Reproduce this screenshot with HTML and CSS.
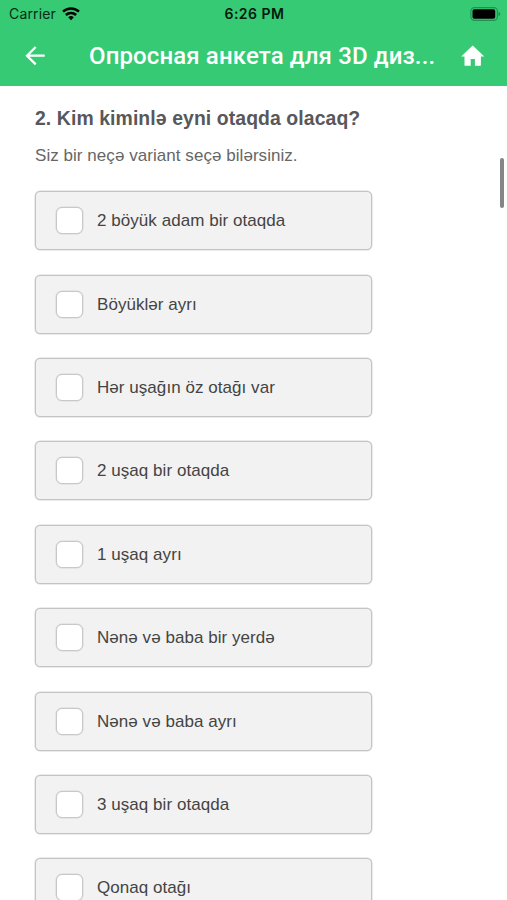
FILE: index.html
```html
<!DOCTYPE html>
<html lang="az">
<head>
<meta charset="utf-8">
<title>Опросная анкета</title>
<link rel="stylesheet" href="styles.css">
</head>
<body>
<header class="top">
  <div class="status">
    <div class="carrier"><span>Carrier</span>
      <svg class="wifi" width="18" height="14" viewBox="0 0 18 14"><g fill="none" stroke="#000" stroke-width="2.5"><path d="M1 4.700a11.4 11.4 0 0 1 16 0"/><path d="M3.900 8a7.200 7.200 0 0 1 10.200 0"/></g><path d="M9 13.200 6.200 10.300a4 4 0 0 1 5.600 0z"/></svg>
    </div>
    <span class="time">6:26 PM</span>
    <svg class="battery" width="31" height="14" viewBox="0 0 31 14"><rect x=".9" y=".6" width="26.500" height="12.8" rx="3.6" fill="none" stroke="#229050" stroke-width="1.1"/><rect x="2.5" y="2.3" width="22.700" height="9.4" rx="1.8"/><path d="M28.500 4.8q1.800.8 1.800 2.200t-1.800 2.200z" fill="#229050"/></svg>
  </div>
  <nav class="bar">
    <svg class="back" width="22" height="22" viewBox="0 0 22 22" fill="none" stroke="#fff" stroke-width="2.3"><path d="M20.700 10.700H3M11.700 2 3 10.700l8.700 8.700"/></svg>
    <h1 class="title">Опросная анкета для 3D диз...</h1>
    <svg class="home" width="24" height="22" viewBox="0 0 24 22"><path fill="#fff" d="M9.700 20.700v-6.700h4.200v6.700h6V11.500H23.300L11.700 .5 .2 11.500h3.300V20.700z"/></svg>
  </nav>
</header>
<main class="content">
  <h2 class="question">2. Kim kiminlə eyni otaqda olacaq?</h2>
  <p class="hint">Siz bir neçə variant seçə bilərsiniz.</p>
  <div class="options">
    <div class="option"><i class="box"></i><span>2 böyük adam bir otaqda</span></div>
    <div class="option"><i class="box"></i><span>Böyüklər ayrı</span></div>
    <div class="option"><i class="box"></i><span>Hər uşağın öz otağı var</span></div>
    <div class="option"><i class="box"></i><span>2 uşaq bir otaqda</span></div>
    <div class="option"><i class="box"></i><span>1 uşaq ayrı</span></div>
    <div class="option"><i class="box"></i><span>Nənə və baba bir yerdə</span></div>
    <div class="option"><i class="box"></i><span>Nənə və baba ayrı</span></div>
    <div class="option"><i class="box"></i><span>3 uşaq bir otaqda</span></div>
    <div class="option"><i class="box"></i><span>Qonaq otağı</span></div>
  </div>
</main>
<div class="scrollbar"></div>
</body>
</html>
```
FILE: styles.css
```css
* { box-sizing: border-box; }
html, body { margin: 0; height: 900px; overflow: hidden; background: #fff; }
body { font-family: "Liberation Sans", Arial, sans-serif; color: #444; }
.top { height: 86px; background: #36ca74; }
.status { display: grid; grid-template-columns: 1fr auto 1fr; align-items: center; height: 27px; padding: 0 6px 0 9px; font: 14px/27px Inter, sans-serif; color: #062b16; }
.carrier { display: flex; align-items: center; gap: 6px; letter-spacing: .15px; }
.time { margin-right: 1px; font-weight: 600; letter-spacing: .5px; color: #001a0a; }
.battery { justify-self: end; }
.bar { display: flex; align-items: center; height: 58px; padding: 0 22px 0 24px; }
.title { flex: 1; margin: 0 0 0 43px; font: 500 24px/58px Roboto, sans-serif; letter-spacing: .12px; color: #fff; white-space: nowrap; }
.content { padding: 20px 0 0 35px; }
.question { margin: 0; font-size: 19.400px; line-height: 24px; letter-spacing: .09px; color: #58585b; white-space: nowrap; }
.hint { margin: 16px 0 0; font-size: 17px; line-height: 20px; letter-spacing: .05px; color: #666; white-space: nowrap; }
.options { display: flex; flex-direction: column; gap: 24.400px; margin-top: 25.300px; }
.option { display: flex; flex: none; align-items: center; gap: 14px; width: 337px; height: 59px; padding-left: 20px; border: 1px solid #c4c4c4; border-radius: 5px; background: #f2f2f2; box-shadow: 0 0 0 .5px #d8d8d8; font-size: 17px; letter-spacing: .05px; white-space: nowrap; }
.box { width: 27px; height: 27px; border: 1px solid #c8c8c8; border-radius: 6px; background: #fff; box-shadow: 0 0 0 .5px #d8d8d8; }
.option span { padding-top: 1px; }
.scrollbar { position: absolute; top: 158px; right: 3px; width: 4px; height: 50px; border-radius: 2px; background: #858585; }
```
